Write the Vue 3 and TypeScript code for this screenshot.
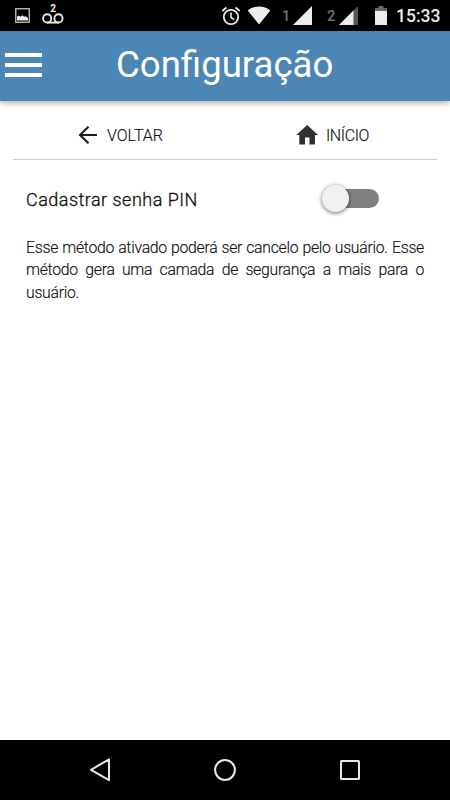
<script setup lang="ts">
import { ref } from 'vue'

const pinEnabled = ref<boolean>(false)
const clock: string = '15:33'
</script>

<template>
  <div class="screen">
    <div class="status">
      <svg class="picture" width="15" height="15" viewBox="0 0 15 15">
        <rect x=".75" y=".75" width="13.5" height="13.5" fill="none" stroke="#c4c4c4" stroke-width="1.3" />
        <path d="M2 12.5V8.6l1.6-1.2 1.8 1.4 2-1.6 1.8 1.6 1.6-.6 2.2 1.8v2.5z" fill="#eee" />
      </svg>
      <div class="voicemail">
        <span class="count">2</span>
        <svg width="22" height="11" viewBox="0 0 22 11">
          <g fill="none" stroke="#e8e8e8" stroke-width="1.9">
            <circle cx="5.2" cy="5.4" r="4.1" />
            <circle cx="16.5" cy="5.4" r="4.1" />
            <path d="M5 9.6h12" />
          </g>
        </svg>
      </div>
      <div class="spacer"></div>
      <svg class="alarm" width="20" height="20" viewBox="0 0 20 20">
        <g fill="none" stroke="#e8e8e8" stroke-width="1.8">
          <circle cx="10" cy="11" r="7.2" />
          <path d="M10 6.5v5l3.3 2.2" stroke-width="1.6" />
          <path d="M1.3 5 5.4 1.5M18.7 5 14.6 1.5" />
        </g>
      </svg>
      <svg class="wifi" width="24" height="19" viewBox="0 0 24 19">
        <path d="M.7 4.5C4 1.7 7.8.5 12 .5s8 1.2 11.3 4L12 18.5z" fill="#ededed" />
      </svg>
      <span class="sim one">1</span>
      <svg class="signal" width="19" height="19" viewBox="0 0 19 19">
        <path d="M0 19 19 0v19z" fill="#ededed" />
      </svg>
      <span class="sim two">2</span>
      <svg class="signal" width="19" height="19" viewBox="0 0 19 19">
        <path d="M0 19 19 0v19z" fill="#555" />
        <path d="M0 19 14.5 4.5V19z" fill="#ededed" />
      </svg>
      <svg class="battery" width="12" height="19" viewBox="0 0 12 19">
        <path d="M0 2h3.5V0h5v2H12v4H0z" fill="#666" />
        <path d="M0 5h12v14H0z" fill="#ededed" />
      </svg>
      <span class="clock">{{ clock }}</span>
    </div>

    <header class="header">
      <button class="menu" aria-label="Menu"><i></i><i></i><i></i></button>
      <h1>Configuração</h1>
    </header>

    <main>
      <nav class="tabs">
        <a class="tab back">
          <svg width="24" height="24" viewBox="0 0 24 24">
            <path d="M21 12H4M12.5 3.8 4 12l8.5 8.2" fill="none" stroke="#1c1c1c" stroke-width="2.1" />
          </svg>
          <span>VOLTAR</span>
        </a>
        <a class="tab home">
          <svg width="24" height="24" viewBox="0 0 24 24">
            <path d="M10 21.5v-7h4.5v7H20V12h3L12.2 2 1.3 12h3v9.5z" fill="#303030" />
          </svg>
          <span>INÍCIO</span>
        </a>
      </nav>
      <section class="setting">
        <span class="label">Cadastrar senha PIN</span>
        <button
          class="switch"
          :class="{ on: pinEnabled }"
          role="switch"
          :aria-checked="pinEnabled"
          aria-label="Cadastrar senha PIN"
          @click="pinEnabled = !pinEnabled"
        ><i></i></button>
      </section>
      <p>Esse método ativado poderá ser cancelo pelo usuário. Esse método gera uma camada de segurança a mais para o usuário.</p>
    </main>

    <footer class="navbar">
      <svg width="24" height="26" viewBox="0 0 24 26">
        <path d="M21 2.3v20.9L3 12.8z" fill="none" stroke="#e8e8e8" stroke-width="2" stroke-linejoin="round" />
      </svg>
      <svg width="24" height="26" viewBox="0 0 24 26">
        <circle cx="12" cy="13" r="9.9" fill="none" stroke="#e8e8e8" stroke-width="2" />
      </svg>
      <svg width="24" height="26" viewBox="0 0 24 26">
        <rect x="3" y="4" width="18" height="18" rx=".5" fill="none" stroke="#e8e8e8" stroke-width="2" />
      </svg>
    </footer>
  </div>
</template>

<style>
body { background: #fff; }
</style>

<style scoped>
.screen {
  display: flex;
  flex-direction: column;
  width: 450px;
  height: 800px;
  overflow: hidden;
  background: #fff;
  color: #111;
  font-family: Roboto, sans-serif;
}
svg { display: block; flex: none; }
button { border: 0; padding: 0; background: none; }
.status {
  display: flex;
  align-items: flex-start;
  flex: none;
  box-sizing: border-box;
  height: 31px;
  padding: 6px 10px 0 15px;
  background: #000;
  color: #ededed;
}
.picture { margin: 2px 12px 0 0; }
.voicemail { display: flex; flex-direction: column; align-items: center; width: 22px; }
.count { height: 7px; font-size: 10px; line-height: 6px; font-weight: 700; }
.spacer { flex: 1; }
.alarm { margin-right: 6px; }
.wifi { margin-right: 11px; }
.sim { width: 12px; font-size: 14.5px; line-height: 22px; font-weight: 500; color: #747474; }
.one { margin-right: -1px; }
.two { margin-left: 15px; }
.battery { margin-left: 17px; }
.clock { width: 44px; margin-left: 9px; font-size: 17.5px; line-height: 21px; font-weight: 500; white-space: nowrap; }
.header {
  display: flex;
  align-items: center;
  flex: none;
  height: 70px;
  background: #4b86b4;
  box-shadow: 0 2px 6px rgba(0, 0, 0, .32);
  color: #fff;
}
.menu { display: flex; flex-direction: column; gap: 6px; width: 37px; margin: -3px 0 0 5px; }
.menu i { height: 4px; background: #fff; }
h1 { margin: -2px 0 0 74px; font-size: 36.6px; line-height: 44px; font-weight: 400; white-space: nowrap; }
main { flex: 1; padding: 10px 13px 0; }
.tabs { display: flex; height: 48px; border-bottom: 1px solid #ccc; }
.tab { display: flex; align-items: center; font-size: 16px; line-height: 22px; font-weight: 300; -webkit-text-stroke: .15px #111; }
.back { width: 219px; padding-left: 63px; box-sizing: border-box; }
.home { padding-left: 63px; }
.tab span { margin: 2px 0 0 7px; }
.home span { letter-spacing: -.4px; }
.setting { display: flex; align-items: center; padding: 24px 0 0 13px; }
.label { width: 296px; font-size: 18px; line-height: 32px; font-weight: 300; letter-spacing: .48px; white-space: nowrap; -webkit-text-stroke: .3px #111; }
.switch { display: flex; align-items: center; width: 57px; height: 19px; margin-top: -4px; border-radius: 10px; background: linear-gradient(to right, transparent 14px, #808080 14px); }
.switch i { width: 27px; height: 27px; border-radius: 50%; background: #f1f1f1; box-shadow: 0 1px 4px rgba(0, 0, 0, .6); }
.switch.on i { margin-left: 30px; }
p { margin: 21px 13px 0; font-size: 15.8px; line-height: 22.3px; font-weight: 300; letter-spacing: -.28px; text-align: justify; -webkit-text-stroke: .15px #111; }
.navbar { display: flex; align-items: center; justify-content: space-between; flex: none; box-sizing: border-box; height: 60px; padding: 0 88px; background: #000; }
</style>
